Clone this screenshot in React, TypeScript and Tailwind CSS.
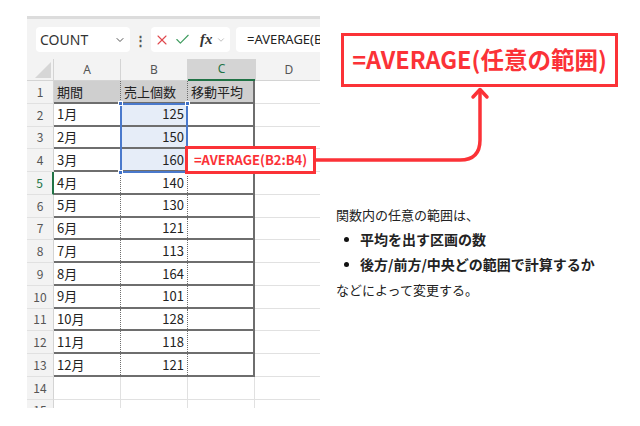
import React from 'react'
import { X, Check, ChevronDown } from 'lucide-react'

const data: string[][] = [
  ['期間', '売上個数', '移動平均'],
  ['1月', '125', ''],
  ['2月', '150', ''],
  ['3月', '160', ''],
  ['4月', '140', ''],
  ['5月', '130', ''],
  ['6月', '121', ''],
  ['7月', '113', ''],
  ['8月', '164', ''],
  ['9月', '101', ''],
  ['10月', '128', ''],
  ['11月', '118', ''],
  ['12月', '121', ''],
]

const RowHead = ({ n, active }: { n: number; active?: boolean }) => (
  <div
    className={
      'w-[27px] h-full shrink-0 flex items-center justify-center text-[12px] bg-[#f3f3f3] border-b border-[#e1e1e1] ' +
      (active ? 'text-[#217346] border-r-2 border-r-[#217346]' : 'text-[#555] border-r border-r-[#d4d4d4]')
    }
  >
    {n}
  </div>
)

const TableRow = ({ cells, idx }: { cells: string[]; idx: number }) => {
  const header = idx === 0
  const selected = idx >= 1 && idx <= 3
  return (
    <div className="h-[22.75px] shrink-0 flex">
      <RowHead n={idx + 1} active={idx === 4} />
      <div className={'flex h-full border-b-2 border-r-2 border-[#6e6e6e] ' + (header ? 'bg-[#cfcfcf]' : 'bg-white')}>
        <div className="w-[67px] h-full pl-[3px] flex items-center border-r border-dotted border-[#6e6e6e] text-[13px] text-[#222]">
          {cells[0]}
        </div>
        <div
          className={
            'w-[67px] h-full px-[3px] flex items-center border-r border-dotted border-[#6e6e6e] text-[13px] text-[#222] ' +
            (header ? 'justify-start' : 'justify-end') +
            (selected ? ' bg-[#e6edf8]' : '')
          }
        >
          {cells[1]}
        </div>
        <div className="w-[65px] h-full pl-[3px] flex items-center text-[13px] text-[#222]">{cells[2]}</div>
      </div>
      <div className="w-[67px] h-full shrink-0 bg-white border-b border-r border-[#e1e1e1]" />
    </div>
  )
}

const EmptyRow = ({ n }: { n: number }) => (
  <div className="h-[22.75px] shrink-0 flex">
    <RowHead n={n} />
    <div className="w-[67px] h-full shrink-0 bg-white border-b border-r border-[#e1e1e1]" />
    <div className="w-[67px] h-full shrink-0 bg-white border-b border-r border-[#e1e1e1]" />
    <div className="w-[67px] h-full shrink-0 bg-white border-b border-r border-[#e1e1e1]" />
    <div className="w-[67px] h-full shrink-0 bg-white border-b border-r border-[#e1e1e1]" />
  </div>
)

const Handle = ({ className }: { className: string }) => (
  <div className={'absolute w-[5px] h-[5px] bg-[#3f70c6] border border-white ' + className} />
)

const Sheet = () => (
  <div className="relative w-[293px] h-[392px] mt-[16px] ml-[27px] shrink-0 overflow-hidden bg-[#f3f3f3] flex flex-col font-['Noto_Sans_CJK_JP',sans-serif]">
    <div className="h-[3px] shrink-0 bg-[#dcdcdc]" />
    {/* formula bar */}
    <div className="h-[40px] shrink-0 flex items-start pt-[8px] pl-[9px]">
      <div className="w-[94px] h-[25px] shrink-0 bg-white rounded-[4px] flex items-center justify-between pl-[4px] pr-[4px] font-['Noto_Sans',sans-serif] text-[14px] text-[#333]">
        <span>COUNT</span>
        <ChevronDown size={12} strokeWidth={2} className="text-[#555]" />
      </div>
      <div className="w-[21px] h-[25px] shrink-0 flex items-center justify-center text-[13px] text-[#555] font-bold">⋮</div>
      <div className="w-[79px] h-[25px] shrink-0 bg-white rounded-[4px] flex items-center pl-[3px]">
        <X size={16} strokeWidth={1.6} className="text-[#e0474c]" />
        <Check size={17} strokeWidth={1.6} className="ml-[4px] text-[#3f9c5f]" />
        <span className="ml-[9px] font-['Liberation_Serif',serif] italic font-bold text-[15px] text-[#333] leading-none">fx</span>
        <ChevronDown size={10} strokeWidth={1.5} className="ml-[3px] text-[#999]" />
      </div>
      <div className="ml-[6px] w-[150px] h-[25px] shrink-0 bg-white rounded-l-[4px] flex items-center pl-[11px] font-['Noto_Sans',sans-serif] text-[13px] text-[#222] whitespace-nowrap">
        =AVERAGE(B2:B4)
      </div>
    </div>
    {/* column headers */}
    <div className="h-[22px] shrink-0 flex text-[12px] text-[#555] font-['Noto_Sans',sans-serif]">
      <div className="w-[27px] h-full shrink-0 relative border-r border-b border-[#d4d4d4]">
        <div className="absolute right-[2px] bottom-[2px] w-0 h-0 border-l-[16px] border-l-transparent border-b-[16px] border-b-[#d6d6d6]" />
      </div>
      <div className="w-[67px] h-full shrink-0 flex items-center justify-center border-r border-b border-[#d4d4d4]">A</div>
      <div className="w-[67px] h-full shrink-0 flex items-center justify-center border-r border-b border-[#d4d4d4]">B</div>
      <div className="w-[67px] h-full shrink-0 flex items-center justify-center bg-[#d4d4d4] text-[#217346] border-b-2 border-[#217346]">C</div>
      <div className="w-[67px] h-full shrink-0 flex items-center justify-center border-l border-b border-[#d4d4d4]">D</div>
    </div>
    {data.map((r, i) => (
      <TableRow key={i} cells={r} idx={i} />
    ))}
    <EmptyRow n={14} />
    <EmptyRow n={15} />
    {/* selection B2:B4 */}
    <div className="absolute left-[93px] top-[87px] w-[68px] h-[70px] border-2 border-[#4a79cc]">
      <Handle className="-left-[4px] -top-[4px]" />
      <Handle className="-right-[4px] -top-[4px]" />
      <Handle className="-left-[4px] -bottom-[4px]" />
      <Handle className="-right-[4px] -bottom-[4px]" />
    </div>
  </div>
)

export default function App() {
  return (
    <div className="relative w-[640px] h-[426px] bg-white flex overflow-hidden font-['Noto_Sans_CJK_JP',sans-serif]">
      <Sheet />
      <div className="flex flex-col pt-[33px] pl-[21px]">
        <div className="w-[277px] h-[54px] border-[3px] border-[#fb3237] flex items-center justify-center text-[#fb3237] font-bold text-[23.5px] whitespace-nowrap">
          =AVERAGE(任意の範囲)
        </div>
        <div className="mt-[115px] -ml-[5px] text-[#222] leading-[25px]">
          <p className="text-[13px]">関数内の任意の範囲は、</p>
          <div className="flex items-center font-bold text-[14px]">
            <span className="ml-[8px] w-[5px] h-[5px] rounded-full bg-[#111]" />
            <span className="ml-[11px]">平均を出す区画の数</span>
          </div>
          <div className="flex items-center font-bold text-[14px]">
            <span className="ml-[8px] w-[5px] h-[5px] rounded-full bg-[#111]" />
            <span className="ml-[11px]">後方/前方/中央どの範囲で計算するか</span>
          </div>
          <p className="text-[13px]">などによって変更する。</p>
        </div>
      </div>
      {/* small formula callout over C4 */}
      <div className="absolute left-[185px] top-[146px] w-[131px] h-[28px] bg-white border-[3px] border-[#fb3237] flex items-center justify-center text-[#fb3237] font-bold text-[13px] whitespace-nowrap">
        =AVERAGE(B2:B4)
      </div>
      <svg className="absolute left-0 top-0 pointer-events-none" width="640" height="426" viewBox="0 0 640 426">
        <path d="M316 160 H460 Q480 160 480 140 V90" fill="none" stroke="#fb3237" strokeWidth="3.5" strokeLinecap="round" strokeLinejoin="round" />
        <path d="M473 97 L480 89.5 L487 97" fill="none" stroke="#fb3237" strokeWidth="3.5" strokeLinecap="round" strokeLinejoin="round" />
      </svg>
    </div>
  )
}
